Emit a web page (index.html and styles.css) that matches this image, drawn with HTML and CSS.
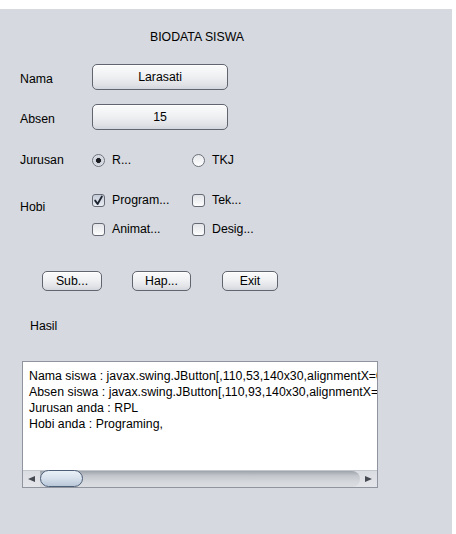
FILE: index.html
```html
<!DOCTYPE html>
<html>
<head>
<meta charset="utf-8">
<link rel="stylesheet" href="styles.css">
</head>
<body>
<div class="frame">
  <div class="title">BIODATA SISWA</div>

  <div class="row r-nama">
    <span class="lbl lbl-low">Nama</span>
    <div class="btn field">Larasati</div>
  </div>

  <div class="row r-absen">
    <span class="lbl lbl-low">Absen</span>
    <div class="btn field">15</div>
  </div>

  <div class="row r-jurusan">
    <span class="lbl">Jurusan</span>
    <div class="opt"><span class="radio on"></span><span>R...</span></div>
    <div class="opt"><span class="radio"></span><span>TKJ</span></div>
  </div>

  <div class="row r-hobi">
    <span class="lbl lbl-hobi">Hobi</span>
    <div class="optgrid">
      <div class="opt"><span class="check on"><svg viewBox="0 0 13 13" width="13" height="13"><path d="M3.2 6.6 L5.6 10 L9.8 2.6" fill="none" stroke="#1f2530" stroke-width="1.9" stroke-linecap="round" stroke-linejoin="round"/></svg></span><span>Program...</span></div>
      <div class="opt"><span class="check"></span><span>Tek...</span></div>
      <div class="opt"><span class="check"></span><span>Animat...</span></div>
      <div class="opt"><span class="check"></span><span>Desig...</span></div>
    </div>
  </div>

  <div class="actions">
    <div class="btn act a-sub">Sub...</div>
    <div class="btn act a-hap">Hap...</div>
    <div class="btn act a-exit">Exit</div>
  </div>

  <div class="hasil">Hasil</div>

  <div class="output">
    <div class="viewport">
      <div class="line">Nama siswa : javax.swing.JButton[,110,53,140x30,alignmentX=0.0,alignmentY=0.5]</div>
      <div class="line">Absen siswa : javax.swing.JButton[,110,93,140x30,alignmentX=0.0,alignmentY=0.5]</div>
      <div class="line">Jurusan anda : RPL</div>
      <div class="line">Hobi anda : Programing,</div>
    </div>
    <div class="hscroll">
      <div class="arrow left"><span class="tri-l"></span></div>
      <div class="track"><div class="thumb"></div></div>
      <div class="arrow right"><span class="tri-r"></span></div>
    </div>
  </div>
</div>
</body>
</html>
```

FILE: styles.css
```css
html, body {
  margin: 0;
  padding: 0;
  background: #ffffff;
}

body {
  font-family: "Liberation Sans", Arial, sans-serif;
  font-size: 12.3px;
  color: #000000;
}

.frame {
  margin-top: 9px;
  width: 452px;
  height: 525px;
  background: #d6d9df;
  padding: 20px 0 0 20px;
  box-sizing: border-box;
  display: flex;
  flex-direction: column;
}

.title {
  height: 16px;
  line-height: 16px;
  padding-left: 130px;
}

.row {
  display: flex;
  align-items: center;
}

.lbl {
  width: 72px;
  line-height: 16px;
}

.lbl-low { padding-top: 4px; }

.r-nama { margin-top: 19px; height: 26px; }
.r-absen { margin-top: 14px; height: 26px; }
.r-jurusan { margin-top: 20px; height: 20px; }
.r-hobi { margin-top: 20px; align-items: flex-start; }

.lbl-hobi { padding-top: 9px; }

.btn {
  box-sizing: border-box;
  border: 1px solid #60656f;
  border-radius: 5px;
  background: linear-gradient(#fbfbfc 0%, #f0f1f3 45%, #e1e3e7 80%, #d3d6dc 100%);
  box-shadow: inset 0 1px 0 #ffffff;
  display: flex;
  align-items: center;
  justify-content: center;
  line-height: 14px;
}

.field {
  width: 136px;
  height: 26px;
}

.opt {
  width: 100px;
  height: 20px;
  display: flex;
  align-items: center;
  gap: 7px;
}

.radio {
  width: 13px;
  height: 13px;
  box-sizing: border-box;
  border-radius: 50%;
  border: 1px solid #6d717b;
  background: linear-gradient(#e6e8eb, #ffffff);
}

.radio.on {
  background: radial-gradient(circle, #1a1c22 0 2.2px, #c9ced8 2.8px, #f4f5f7 100%);
}

.check {
  width: 13px;
  height: 13px;
  box-sizing: border-box;
  border-radius: 3px;
  border: 1px solid #666a74;
  background: linear-gradient(#e2e4e8, #fdfdfd);
  position: relative;
}

.check.on {
  background: linear-gradient(#c6ccd8, #e9edf3);
}

.check svg {
  position: absolute;
  left: -1px;
  top: -1px;
}

.optgrid {
  display: grid;
  grid-template-columns: 100px 100px;
  row-gap: 9px;
}

.actions {
  margin-top: 32px;
  margin-left: 22px;
  display: flex;
  height: 20px;
}

.act {
  height: 20px;
}

.a-sub { width: 60px; }
.a-hap { width: 59px; margin-left: 30px; }
.a-exit { width: 56px; margin-left: 31px; }

.hasil {
  margin-top: 27px;
  margin-left: 10px;
  line-height: 16px;
}

.output {
  margin-top: 27px;
  margin-left: 2px;
  width: 356px;
  height: 127px;
  box-sizing: border-box;
  border: 1px solid #8f949e;
  background: #ffffff;
  display: flex;
  flex-direction: column;
}

.viewport {
  flex: 1;
  overflow: hidden;
  padding: 6px 0 0 6px;
}

.line {
  white-space: pre;
  line-height: 16px;
  letter-spacing: 0.03px;
}

.hscroll {
  height: 16px;
  display: flex;
  background: linear-gradient(#dadde2, #e3e5e9);
  border-top: 1px solid #c3c7ce;
}

.arrow {
  width: 17px;
  display: flex;
  align-items: center;
  justify-content: center;
}

.tri-l {
  width: 0;
  height: 0;
  border-top: 3.5px solid transparent;
  border-bottom: 3.5px solid transparent;
  border-right: 7px solid #454952;
}

.tri-r {
  width: 0;
  height: 0;
  border-top: 3.5px solid transparent;
  border-bottom: 3.5px solid transparent;
  border-left: 7px solid #454952;
}

.track {
  flex: 1;
  display: flex;
  background: linear-gradient(#9ea2aa 0%, #c3c6cc 30%, #d5d8dc 70%, #dadce0 100%);
  border-radius: 0 8px 8px 0;
}

.thumb {
  width: 43px;
  height: 17px;
  margin-top: -1px;
  box-sizing: border-box;
  border: 1px solid #4e5f78;
  border-radius: 9px;
  background: linear-gradient(#eaf0f7 0%, #d6e0ec 50%, #b9c7d8 100%);
}
```
